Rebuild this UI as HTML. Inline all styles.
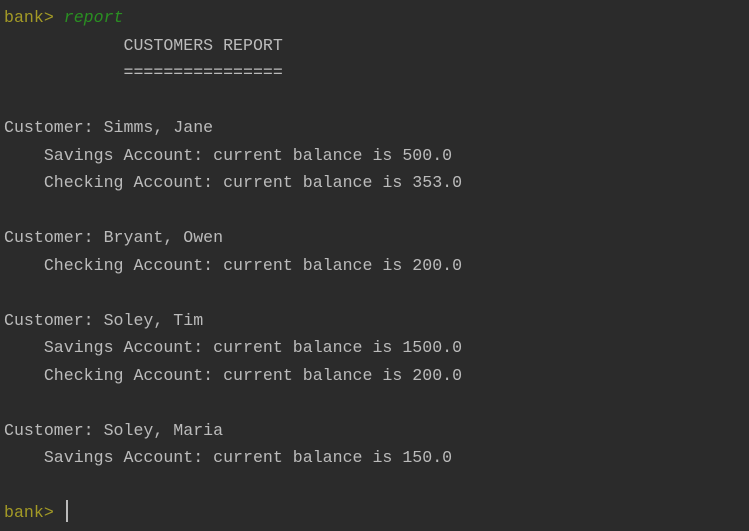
<!DOCTYPE html>
<html><head><style>
html,body{margin:0;padding:0;background:#2b2b2b;width:749px;height:531px;overflow:hidden}
pre{margin:0;padding:4px 0 0 4px;font-family:"Liberation Mono",monospace;font-size:16.6px;line-height:27.5px;color:#bbbbbb}
.p{color:#a39a26}.g{color:#2a8f22;font-style:italic}
.c{display:inline-block;width:2px;height:22px;background:#bbbbbb;vertical-align:-5px;margin-left:2px}
</style></head><body><pre><span class="p">bank&gt;</span> <span class="g">report</span>
            CUSTOMERS REPORT
            ================

Customer: Simms, Jane
    Savings Account: current balance is 500.0
    Checking Account: current balance is 353.0

Customer: Bryant, Owen
    Checking Account: current balance is 200.0

Customer: Soley, Tim
    Savings Account: current balance is 1500.0
    Checking Account: current balance is 200.0

Customer: Soley, Maria
    Savings Account: current balance is 150.0

<span class="p">bank&gt;</span> <span class="c"></span></pre></body></html>
